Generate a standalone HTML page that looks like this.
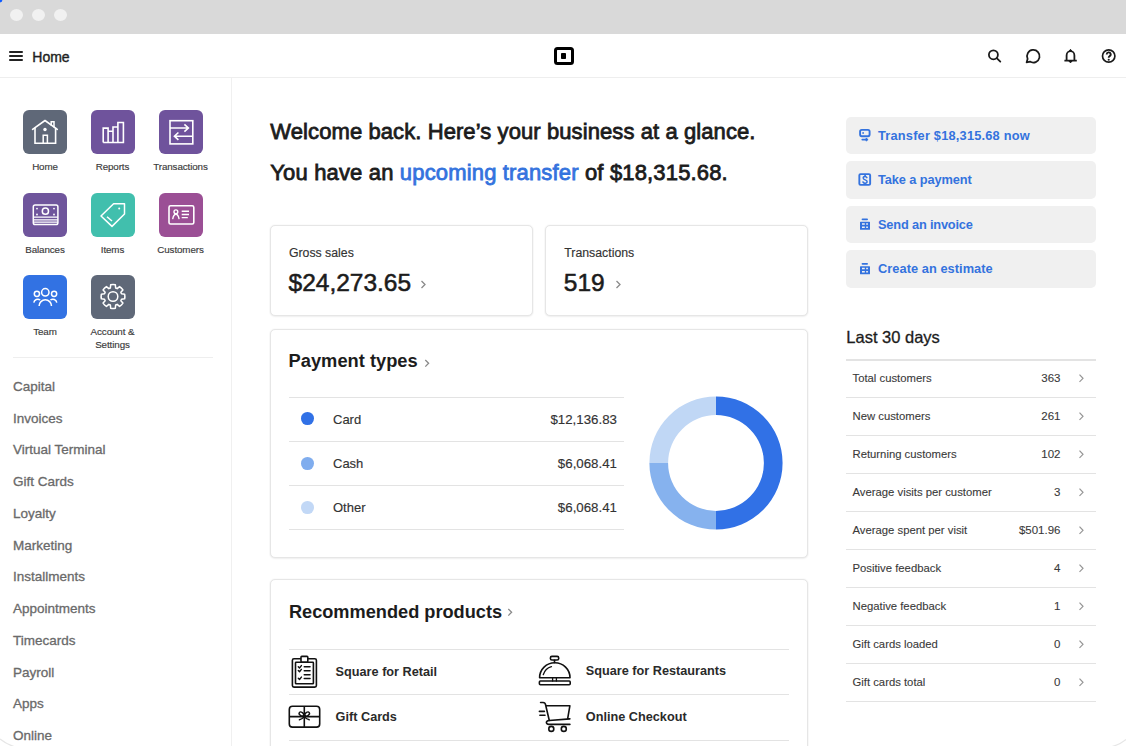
<!DOCTYPE html>
<html><head><meta charset="utf-8">
<style>
*{margin:0;padding:0;box-sizing:border-box}
html,body{width:1126px;height:746px;overflow:hidden;background:#fff;font-family:"Liberation Sans",sans-serif;color:#1f1f1f}
.a{position:absolute}
.t,.menu{-webkit-text-stroke:0.3px currentColor}
.rl,.rv{-webkit-text-stroke:0.1px currentColor}
.lbl{-webkit-text-stroke:0.15px currentColor}
.t{position:absolute;line-height:1;white-space:nowrap}
#titlebar{left:0;top:0;width:1126px;height:34px;background:#d9d9d9}
.dot{position:absolute;top:9px;width:13px;height:12px;border-radius:50%;background:#f1f1f1}
#header{left:0;top:34px;width:1126px;height:44px;background:#fff;border-bottom:1px solid #eeeeee}
#sidebar{left:0;top:78px;width:232px;height:668px;border-right:1px solid #f0f0f0}
.tile{position:absolute;width:44px;height:44px;border-radius:6px}
.tile svg{position:absolute;left:0;top:0}
.lbl{position:absolute;line-height:1;white-space:nowrap;font-size:9.8px;letter-spacing:-0.1px;color:#3a3a3a;text-align:center;width:80px}
.menu{position:absolute;left:13px;line-height:1;white-space:nowrap;font-size:13.5px;color:#6a6a6a}
.card{position:absolute;background:#fff;border:1px solid #e6e6e6;border-radius:5px;box-shadow:0 0 2px rgba(0,0,0,0.07),0 1px 2px rgba(0,0,0,0.05)}
.hline{position:absolute;height:1px;background:#e3e3e3}
.btn{position:absolute;left:846px;width:250px;height:37.5px;background:#f0f0f0;border-radius:5px}
.btxt{position:absolute;left:878px;line-height:1;white-space:nowrap;font-size:12.8px;font-weight:700;color:#3473de}
.rl{position:absolute;left:852.5px;line-height:1;white-space:nowrap;font-size:11.3px;color:#3a3a3a}
.rv{position:absolute;right:65.5px;line-height:1;white-space:nowrap;font-size:11.5px;color:#3a3a3a;text-align:right}
</style></head><body>
<div id="titlebar" class="a">
  <div class="dot" style="left:9.5px"></div>
  <div class="dot" style="left:31.5px"></div>
  <div class="dot" style="left:53.5px"></div>
</div>
<div id="header" class="a"></div>
<!-- hamburger -->
<div class="a" style="left:9px;top:50.8px;width:14.3px;height:1.8px;background:#222;border-radius:0.9px"></div>
<div class="a" style="left:9px;top:55px;width:14.3px;height:1.8px;background:#222;border-radius:0.9px"></div>
<div class="a" style="left:9px;top:59.3px;width:14.3px;height:1.8px;background:#222;border-radius:0.9px"></div>
<div class="t" style="left:32.3px;top:50px;font-size:14px;color:#1f1f1f;-webkit-text-stroke:0.4px #1f1f1f">Home</div>
<!-- square logo -->
<div class="a" style="left:554.4px;top:46.6px;width:19.2px;height:18.8px;border:3.3px solid #000;border-radius:3.5px"></div>
<div class="a" style="left:561.3px;top:53.4px;width:5.2px;height:5.2px;background:#000;border-radius:0.8px"></div>


<svg class="a" style="left:980px;top:42px" width="140" height="28" viewBox="980 42 140 28">
  <circle cx="993.4" cy="54.8" r="4.5" fill="none" stroke="#1a1a1a" stroke-width="1.8"/>
  <path d="M996.7 58.2 L1000.3 61.6" stroke="#1a1a1a" stroke-width="1.8" stroke-linecap="round"/>
  <path d="M1026.6 62.4 L1027.6 58.9 A6.3 6.3 0 1 1 1030 61.6 Z" fill="none" stroke="#1a1a1a" stroke-width="1.8" stroke-linejoin="round"/>
  <path d="M1064.4 60.6 H1076.8 M1066.6 60.6 V55.4 A3.9 4.2 0 0 1 1074.4 55.4 V60.6" fill="none" stroke="#1a1a1a" stroke-width="1.8"/>
  <path d="M1069.3 50.9 L1070.5 49.3 L1071.7 50.9 Z M1068.9 61 L1070.5 62.9 L1072.1 61 Z" fill="#1a1a1a" stroke="#1a1a1a" stroke-width="0.9" stroke-linejoin="round"/>
  <circle cx="1108.7" cy="56" r="6.2" fill="none" stroke="#1a1a1a" stroke-width="1.7"/>
  <path d="M1106.7 54.4 A2 2 0 1 1 1109.5 56.2 C1108.9 56.6 1108.7 57 1108.7 57.7" fill="none" stroke="#1a1a1a" stroke-width="1.9" stroke-linecap="butt"/>
  <circle cx="1108.7" cy="59.7" r="1.05" fill="#1a1a1a"/>
</svg>
<div id="sidebar" class="a"></div>
<!--SIDEBAR-->
<div class="tile" style="left:23px;top:110px;background:#5f6878"><svg width="44" height="44" viewBox="0 0 44 44"><g transform="translate(0,1)"><path d="M9.6 18.3 L22 9.5 L34.3 18.3" fill="none" stroke="#fff" stroke-width="1.6" stroke-linecap="round" stroke-linejoin="round"/><path d="M12 16.8 V32.3 H32.6 V16.8" fill="none" stroke="#fff" stroke-width="1.6"/><path d="M28.2 14.5 V10.8 H31 V16.4" fill="none" stroke="#fff" stroke-width="1.5"/><circle cx="22" cy="18.5" r="1.7" fill="#fff"/><path d="M20.2 32.3 V24.3 H24.4 V32.3" fill="none" stroke="#fff" stroke-width="1.5"/></g></svg></div>
<div class="lbl" style="left:5.0px;top:162.4px">Home</div>
<div class="tile" style="left:90.5px;top:110px;background:#6f539c"><svg width="44" height="44" viewBox="0 0 44 44"><g transform="translate(0,0.5)"><path d="M12.2 32 V17.6 H17.1 V32 M17.1 32 V20.8 H22 V32 M22 32 V16.5 H26.9 V32 M26.9 32 V12 H32.4 V32 H12.2" fill="none" stroke="#fff" stroke-width="1.6" stroke-linejoin="miter"/></g></svg></div>
<div class="lbl" style="left:72.5px;top:162.4px">Reports</div>
<div class="tile" style="left:158.5px;top:110px;background:#6f539c"><svg width="44" height="44" viewBox="0 0 44 44"><g transform="translate(0,0.5)"><rect x="11" y="10.2" width="22.8" height="23.2" fill="none" stroke="#fff" stroke-width="1.6"/><path d="M11 17.5 H29.4 M25.4 13.8 L29.4 17.5 L25.4 21.2 M33.8 25.7 H15.4 M19.4 22 L15.4 25.7 L19.4 29.4" fill="none" stroke="#fff" stroke-width="1.6"/></g></svg></div>
<div class="lbl" style="left:140.5px;top:162.4px">Transactions</div>
<div class="tile" style="left:23px;top:193px;background:#6f559c"><svg width="44" height="44" viewBox="0 0 44 44"><rect x="10.3" y="11.9" width="24.6" height="19.6" rx="1.8" fill="none" stroke="#fff" stroke-width="1.5"/><path d="M10.3 24.2 H34.9 M10.3 26.8 H34.9 M10.3 29.2 H34.9" stroke="#fff" stroke-width="1.3"/><circle cx="22.4" cy="18.2" r="3.1" fill="none" stroke="#fff" stroke-width="1.5"/><circle cx="14" cy="15.6" r="0.9" fill="#fff"/><circle cx="31" cy="15.6" r="0.9" fill="#fff"/><circle cx="14" cy="21.5" r="0.9" fill="#fff"/><circle cx="31" cy="21.5" r="0.9" fill="#fff"/></svg></div>
<div class="lbl" style="left:5.0px;top:245.1px">Balances</div>
<div class="tile" style="left:90.5px;top:193px;background:#41bfad"><svg width="44" height="44" viewBox="0 0 44 44"><path d="M22.6 10.8 H33.5 V21 L21 33.4 L10 23 Z" fill="none" stroke="#fff" stroke-width="1.5" stroke-linejoin="round"/><circle cx="28.2" cy="15.6" r="1" fill="#fff"/><path d="M16 23.8 L21 28" stroke="#fff" stroke-width="1.5"/></svg></div>
<div class="lbl" style="left:72.5px;top:245.1px">Items</div>
<div class="tile" style="left:158.5px;top:193px;background:#9b4f95"><svg width="44" height="44" viewBox="0 0 44 44"><rect x="10" y="12.8" width="24.8" height="18.2" rx="1.6" fill="none" stroke="#fff" stroke-width="1.6"/><circle cx="16.9" cy="18.8" r="1.9" fill="none" stroke="#fff" stroke-width="1.4"/><path d="M13.8 25.6 C14.4 22.8 15.4 21.3 16.9 21.3 C18.4 21.3 19.4 22.8 20 25.6" fill="none" stroke="#fff" stroke-width="1.4" stroke-linecap="round"/><path d="M22.7 18.3 H30 M22.7 21.5 H30 M22.7 24.6 H28.8" stroke="#fff" stroke-width="1.4"/></svg></div>
<div class="lbl" style="left:140.5px;top:245.1px">Customers</div>
<div class="tile" style="left:23px;top:275px;background:#3272e3"><svg width="44" height="44" viewBox="0 0 44 44"><circle cx="22.3" cy="17.3" r="3.7" fill="none" stroke="#fff" stroke-width="1.5"/><circle cx="13.9" cy="18.8" r="2.6" fill="none" stroke="#fff" stroke-width="1.5"/><circle cx="31.1" cy="18.8" r="2.6" fill="none" stroke="#fff" stroke-width="1.5"/><path d="M16.1 31 A6.2 6.2 0 0 1 28.5 31" fill="none" stroke="#fff" stroke-width="1.5"/><path d="M10.8 27.6 A4 4 0 0 1 17.2 25" fill="none" stroke="#fff" stroke-width="1.5"/><path d="M27.4 25 A4 4 0 0 1 33.8 27.6" fill="none" stroke="#fff" stroke-width="1.5"/></svg></div>
<div class="lbl" style="left:5.0px;top:327.2px">Team</div>
<div class="tile" style="left:90.5px;top:275px;background:#5f6878"><svg width="44" height="44" viewBox="0 0 44 44"><path d="M19.37 13.00 L19.64 9.84 A11.9 11.9 0 0 1 24.36 9.84 L24.63 13.00 A8.9 8.9 0 0 1 26.15 13.63 L28.58 11.58 A11.9 11.9 0 0 1 31.92 14.92 L29.87 17.35 A8.9 8.9 0 0 1 30.50 18.87 L33.66 19.14 A11.9 11.9 0 0 1 33.66 23.86 L30.50 24.13 A8.9 8.9 0 0 1 29.87 25.65 L31.92 28.08 A11.9 11.9 0 0 1 28.58 31.42 L26.15 29.37 A8.9 8.9 0 0 1 24.63 30.00 L24.36 33.16 A11.9 11.9 0 0 1 19.64 33.16 L19.37 30.00 A8.9 8.9 0 0 1 17.85 29.37 L15.42 31.42 A11.9 11.9 0 0 1 12.08 28.08 L14.13 25.65 A8.9 8.9 0 0 1 13.50 24.13 L10.34 23.86 A11.9 11.9 0 0 1 10.34 19.14 L13.50 18.87 A8.9 8.9 0 0 1 14.13 17.35 L12.08 14.92 A11.9 11.9 0 0 1 15.42 11.58 L17.85 13.63 A8.9 8.9 0 0 1 19.37 13.00 Z" fill="none" stroke="#fff" stroke-width="1.5" stroke-linejoin="round"/><circle cx="22" cy="21.5" r="4.8" fill="none" stroke="#fff" stroke-width="1.5"/></svg></div>
<div class="lbl" style="left:72.5px;top:327.2px">Account &amp;</div>
<div class="lbl" style="left:72.5px;top:339.9px">Settings</div>
<div class="a" style="left:13px;top:357px;width:200px;height:1px;background:#eeeeee"></div>
<div class="menu" style="top:380.00px">Capital</div>
<div class="menu" style="top:411.75px">Invoices</div>
<div class="menu" style="top:443.49px">Virtual Terminal</div>
<div class="menu" style="top:475.24px">Gift Cards</div>
<div class="menu" style="top:506.98px">Loyalty</div>
<div class="menu" style="top:538.73px">Marketing</div>
<div class="menu" style="top:570.47px">Installments</div>
<div class="menu" style="top:602.22px">Appointments</div>
<div class="menu" style="top:633.96px">Timecards</div>
<div class="menu" style="top:665.70px">Payroll</div>
<div class="menu" style="top:697.45px">Apps</div>
<div class="menu" style="top:729.19px">Online</div>
<!--/SIDEBAR-->
<!--MAIN-->
<div class="t" style="left:270.3px;top:120.6px;font-size:22px;font-weight:400;-webkit-text-stroke:0.8px #1c1c1c;color:#1c1c1c;letter-spacing:0.09px">Welcome back. Here’s your business at a glance.</div>
<div class="t" style="left:270.3px;top:161.7px;font-size:22px;font-weight:400;-webkit-text-stroke:0.8px #1c1c1c;color:#1c1c1c;letter-spacing:0.16px">You have an <span style="color:#3473de;-webkit-text-stroke:0.8px #3473de">upcoming transfer</span> of $18,315.68.</div>

<div class="card" style="left:269.5px;top:224.5px;width:263px;height:91.5px"></div>
<div class="t" style="left:288.9px;top:246.8px;font-size:12.3px;color:#333;-webkit-text-stroke:0.15px #333">Gross sales</div>
<div class="t" style="left:288.5px;top:270.8px;font-size:24.5px;color:#1c1c1c;-webkit-text-stroke:0.55px #1c1c1c">$24,273.65</div>
<svg class="a" style="left:419px;top:279px" width="9" height="11" viewBox="0 0 9 11"><path d="M2.5 2 L6 5.5 L2.5 9" fill="none" stroke="#8a8a8a" stroke-width="1.3"/></svg>

<div class="card" style="left:545px;top:224.5px;width:263px;height:91.5px"></div>
<div class="t" style="left:564.3px;top:246.8px;font-size:12.3px;color:#333;-webkit-text-stroke:0.15px #333">Transactions</div>
<div class="t" style="left:563.8px;top:270.8px;font-size:24.5px;color:#1c1c1c;-webkit-text-stroke:0.55px #1c1c1c">519</div>
<svg class="a" style="left:613.5px;top:279px" width="9" height="11" viewBox="0 0 9 11"><path d="M2.5 2 L6 5.5 L2.5 9" fill="none" stroke="#8a8a8a" stroke-width="1.3"/></svg>

<div class="card" style="left:269.5px;top:329px;width:538.5px;height:229px"></div>
<div class="t" style="left:288.6px;top:351.8px;font-size:18.3px;font-weight:700;-webkit-text-stroke:0;color:#1c1c1c">Payment types</div>
<svg class="a" style="left:422.5px;top:357.5px" width="9" height="11" viewBox="0 0 9 11"><path d="M2.3 2 L5.6 5.3 L2.3 8.6" fill="none" stroke="#8a8a8a" stroke-width="1.3"/></svg>
<div class="hline" style="left:288.5px;top:397px;width:335.5px"></div>
<div class="hline" style="left:288.5px;top:440.5px;width:335.5px"></div>
<div class="hline" style="left:288.5px;top:484.8px;width:335.5px"></div>
<div class="hline" style="left:288.5px;top:528.8px;width:335.5px"></div>
<div class="a" style="left:301px;top:412.4px;width:12.8px;height:12.8px;border-radius:50%;background:#3171e6"></div>
<div class="a" style="left:301px;top:457.1px;width:12.8px;height:12.8px;border-radius:50%;background:#80adee"></div>
<div class="a" style="left:301px;top:501.3px;width:12.8px;height:12.8px;border-radius:50%;background:#c2d8f6"></div>
<div class="t" style="left:333px;top:413px;font-size:13px;color:#333;-webkit-text-stroke:0.15px #333">Card</div>
<div class="t" style="left:333px;top:456.9px;font-size:13px;color:#333;-webkit-text-stroke:0.15px #333">Cash</div>
<div class="t" style="left:333px;top:501.2px;font-size:13px;color:#333;-webkit-text-stroke:0.15px #333">Other</div>
<div class="t" style="right:509px;top:413px;font-size:13.3px;color:#333;-webkit-text-stroke:0.15px #333">$12,136.83</div>
<div class="t" style="right:509px;top:456.9px;font-size:13.3px;color:#333;-webkit-text-stroke:0.15px #333">$6,068.41</div>
<div class="t" style="right:509px;top:501.2px;font-size:13.3px;color:#333;-webkit-text-stroke:0.15px #333">$6,068.41</div>
<svg class="a" style="left:648px;top:395px" width="136" height="136" viewBox="0 0 136 136">
  <path d="M68 1.4 A66.6 66.6 0 0 1 68 134.6 L68 115.9 A47.9 47.9 0 0 0 68 20.1 Z" fill="#3171e6"/>
  <path d="M68 134.6 A66.6 66.6 0 0 1 1.4 68 L20.1 68 A47.9 47.9 0 0 0 68 115.9 Z" fill="#86b2ee"/>
  <path d="M1.4 68 A66.6 66.6 0 0 1 68 1.4 L68 20.1 A47.9 47.9 0 0 0 20.1 68 Z" fill="#c0d7f5"/>
</svg>

<div class="card" style="left:269.5px;top:579.3px;width:538.5px;height:200px"></div>
<div class="t" style="left:288.9px;top:602.6px;font-size:18.2px;font-weight:700;-webkit-text-stroke:0;color:#1c1c1c">Recommended products</div>
<svg class="a" style="left:506px;top:606.5px" width="9" height="11" viewBox="0 0 9 11"><path d="M2.3 2 L5.6 5.3 L2.3 8.6" fill="none" stroke="#8a8a8a" stroke-width="1.3"/></svg>
<div class="hline" style="left:288.5px;top:649px;width:500.5px"></div>
<div class="hline" style="left:288.5px;top:694.2px;width:500.5px"></div>
<div class="hline" style="left:288.5px;top:739.5px;width:500.5px"></div>
<div class="t" style="left:335.6px;top:666.2px;font-size:12.7px;font-weight:700;-webkit-text-stroke:0;color:#2a2a2a">Square for Retail</div>
<div class="t" style="left:585.8px;top:665.2px;font-size:12.7px;font-weight:700;-webkit-text-stroke:0;color:#2a2a2a">Square for Restaurants</div>
<div class="t" style="left:335.6px;top:711px;font-size:12.7px;font-weight:700;-webkit-text-stroke:0;color:#2a2a2a">Gift Cards</div>
<div class="t" style="left:585.8px;top:711px;font-size:12.7px;font-weight:700;-webkit-text-stroke:0;color:#2a2a2a">Online Checkout</div>

<svg class="a" style="left:280px;top:650px" width="300" height="90" viewBox="280 650 300 90">
 <g fill="none" stroke="#111" stroke-width="1.6" stroke-linejoin="round" stroke-linecap="round">
  <rect x="292.4" y="658.7" width="24" height="28.4" rx="1.6"/>
  <rect x="295.5" y="662.3" width="17.9" height="21.5" rx="0.6"/>
  <rect x="301" y="656.4" width="6.8" height="5.6" rx="0.8" fill="#fff"/>
  <path d="M298.3 666.8 L299.5 668 L301.4 665.6 M298.3 670.6 L299.5 671.8 L301.4 669.4 M298.3 678.3 L299.5 679.5 L301.4 677.1" stroke-width="1.4"/>
  <path d="M304.3 666.8 H310 M304.3 670.8 H310 M304.3 674.7 H310 M304.3 678.5 H310" stroke-width="1.6"/>
  <rect x="289.3" y="706.3" width="30.4" height="20.8" rx="3.2"/>
  <path d="M304.3 706.3 V727.1 M289.3 716.6 H319.7" stroke-linecap="butt"/>
  <ellipse cx="301.4" cy="714" rx="2.5" ry="1.7" transform="rotate(35 301.4 714)" stroke-width="1.4"/><ellipse cx="307.2" cy="714" rx="2.5" ry="1.7" transform="rotate(-35 307.2 714)" stroke-width="1.4"/><path d="M304.3 716.8 C302.5 718.6 300.5 719.6 299.4 719.8 M304.3 716.8 C306.1 718.6 308.1 719.6 309.2 719.8" stroke-width="1.4"/>
 </g>
 <g fill="none" stroke="#111" stroke-width="1.6" stroke-linejoin="round" stroke-linecap="round">
  <rect x="550.4" y="656.4" width="8.3" height="3.6" rx="1.5"/>
  <path d="M554.5 660.2 V662.6"/>
  <path d="M539.6 677.8 A15.2 15 0 0 1 570 677.8 Z"/>
  <path d="M543.3 674.6 A12 12 0 0 1 551.4 666.6" stroke-width="1.4"/>
  <rect x="539.4" y="681" width="30.8" height="3.7" rx="1"/>
  <path d="M552.6 678 V681 M556.4 678 V681" stroke-width="1.3"/>
  <path d="M540.6 702.5 H543 C544.7 702.5 545.6 703.6 545.8 705.7 L549.3 720.5 L569.9 718.9 M545.8 705.7 H569.9 L567.6 719.1"/>
  <path d="M549.3 720.5 C546.8 720.7 546.3 722 546.4 722.6 C546.6 723.9 547.5 724.4 549 724.4 H569.9"/>
  <circle cx="551.3" cy="728.9" r="2.5"/>
  <circle cx="563.8" cy="728.9" r="2.5"/>
  <path d="M539.4 711.4 H544.4 M539.9 715.3 H545"/>
 </g>
</svg>


<!--RIGHT-->
<div class="btn" style="top:116.5px"></div>
<div class="btn" style="top:161px"></div>
<div class="btn" style="top:205.5px"></div>
<div class="btn" style="top:250px"></div>
<div class="btxt" style="top:130px;letter-spacing:0.2px">Transfer $18,315.68 now</div>
<div class="btxt" style="top:174.3px;letter-spacing:-0.1px">Take a payment</div>
<div class="btxt" style="top:218.8px;letter-spacing:-0.18px">Send an invoice</div>
<div class="btxt" style="top:263.2px;letter-spacing:0.05px">Create an estimate</div>

<svg class="a" style="left:850px;top:120px" width="30" height="160" viewBox="850 120 30 160">
 <g fill="none" stroke="#3473de" stroke-width="1.9" stroke-linejoin="round">
  <rect x="860.1" y="129.9" width="9.5" height="6.3" rx="1.6"/>
  <circle cx="863.1" cy="133" r="0.9" fill="#3473de" stroke="none"/>
  <path d="M862.3 139.6 H866.5" stroke-linecap="round" stroke-width="1.8"/>
  <path d="M866.1 138.1 L868.1 139.6 L866.1 141.1 Z" fill="#3473de" stroke-width="0.9"/>
  <rect x="859.35" y="174.15" width="10.8" height="10.7" rx="1.2"/>
  <path d="M866.9 177.6 C866.5 176.8 865.9 176.5 865.1 176.5 C863.9 176.5 863.2 177.2 863.2 178 C863.2 180.4 867.1 179.4 867.1 181.6 C867.1 182.6 866.2 183.2 865.1 183.2 C864.2 183.2 863.5 182.8 863 182" stroke-width="1.5" stroke-linecap="round"/>
  <path d="M865.1 174.6 V176.6 M865.1 183.2 V185" stroke-width="1.6"/>
 </g>
 <g fill="#3473de">
  <rect x="861.6" y="218.4" width="6.4" height="1.8" rx="0.9"/>
  <path d="M860.6 221.7 H869.4 A0.6 0.6 0 0 1 870 222.3 V229.2 A0.6 0.6 0 0 1 869.4 229.8 H860.6 A0.6 0.6 0 0 1 860 229.2 V222.3 A0.6 0.6 0 0 1 860.6 221.7 Z M862 223.2 V224.8 H864.8 V223.2 Z M866.2 223.2 V224.8 H867.9 V223.2 Z M862 226.4 V227.9 H864.8 V226.4 Z M866.2 226.4 V227.9 H867.9 V226.4 Z" fill-rule="evenodd"/>
  <rect x="861.6" y="262.9" width="6.4" height="1.8" rx="0.9"/>
  <path d="M860.6 266.2 H869.4 A0.6 0.6 0 0 1 870 266.8 V273.7 A0.6 0.6 0 0 1 869.4 274.3 H860.6 A0.6 0.6 0 0 1 860 273.7 V266.8 A0.6 0.6 0 0 1 860.6 266.2 Z M862 267.7 V269.3 H864.8 V267.7 Z M866.2 267.7 V269.3 H867.9 V267.7 Z M862 270.9 V272.4 H864.8 V270.9 Z M866.2 270.9 V272.4 H867.9 V270.9 Z" fill-rule="evenodd"/>
 </g>
</svg>

<div class="t" style="left:846.3px;top:328.5px;font-size:16.5px;color:#1c1c1c">Last 30 days</div>

<div class="hline" style="left:846px;top:359.4px;width:250px;height:1.5px"></div>
<div class="hline" style="left:846px;top:397.3px;width:250px"></div>
<div class="hline" style="left:846px;top:435.3px;width:250px"></div>
<div class="hline" style="left:846px;top:473.2px;width:250px"></div>
<div class="hline" style="left:846px;top:511.2px;width:250px"></div>
<div class="hline" style="left:846px;top:549.1px;width:250px"></div>
<div class="hline" style="left:846px;top:587.1px;width:250px"></div>
<div class="hline" style="left:846px;top:625.0px;width:250px"></div>
<div class="hline" style="left:846px;top:663.0px;width:250px"></div>
<div class="hline" style="left:846px;top:701.0px;width:250px"></div>
<div class="rl" style="top:373.0px">Total customers</div>
<div class="rv" style="top:373.0px">363</div>
<svg class="a" style="left:1077px;top:373.2px" width="9" height="10" viewBox="0 0 9 10"><path d="M2.5 1.7 L6 5.3 L2.5 8.9" fill="none" stroke="#969696" stroke-width="1.2"/></svg>
<div class="rl" style="top:410.9px">New customers</div>
<div class="rv" style="top:410.9px">261</div>
<svg class="a" style="left:1077px;top:411.1px" width="9" height="10" viewBox="0 0 9 10"><path d="M2.5 1.7 L6 5.3 L2.5 8.9" fill="none" stroke="#969696" stroke-width="1.2"/></svg>
<div class="rl" style="top:448.9px">Returning customers</div>
<div class="rv" style="top:448.9px">102</div>
<svg class="a" style="left:1077px;top:449.1px" width="9" height="10" viewBox="0 0 9 10"><path d="M2.5 1.7 L6 5.3 L2.5 8.9" fill="none" stroke="#969696" stroke-width="1.2"/></svg>
<div class="rl" style="top:486.8px">Average visits per customer</div>
<div class="rv" style="top:486.8px">3</div>
<svg class="a" style="left:1077px;top:487.1px" width="9" height="10" viewBox="0 0 9 10"><path d="M2.5 1.7 L6 5.3 L2.5 8.9" fill="none" stroke="#969696" stroke-width="1.2"/></svg>
<div class="rl" style="top:524.8px">Average spent per visit</div>
<div class="rv" style="top:524.8px">$501.96</div>
<svg class="a" style="left:1077px;top:525.0px" width="9" height="10" viewBox="0 0 9 10"><path d="M2.5 1.7 L6 5.3 L2.5 8.9" fill="none" stroke="#969696" stroke-width="1.2"/></svg>
<div class="rl" style="top:562.7px">Positive feedback</div>
<div class="rv" style="top:562.7px">4</div>
<svg class="a" style="left:1077px;top:563.0px" width="9" height="10" viewBox="0 0 9 10"><path d="M2.5 1.7 L6 5.3 L2.5 8.9" fill="none" stroke="#969696" stroke-width="1.2"/></svg>
<div class="rl" style="top:600.7px">Negative feedback</div>
<div class="rv" style="top:600.7px">1</div>
<svg class="a" style="left:1077px;top:600.9px" width="9" height="10" viewBox="0 0 9 10"><path d="M2.5 1.7 L6 5.3 L2.5 8.9" fill="none" stroke="#969696" stroke-width="1.2"/></svg>
<div class="rl" style="top:638.6px">Gift cards loaded</div>
<div class="rv" style="top:638.6px">0</div>
<svg class="a" style="left:1077px;top:638.9px" width="9" height="10" viewBox="0 0 9 10"><path d="M2.5 1.7 L6 5.3 L2.5 8.9" fill="none" stroke="#969696" stroke-width="1.2"/></svg>
<div class="rl" style="top:676.6px">Gift cards total</div>
<div class="rv" style="top:676.6px">0</div>
<svg class="a" style="left:1077px;top:676.8px" width="9" height="10" viewBox="0 0 9 10"><path d="M2.5 1.7 L6 5.3 L2.5 8.9" fill="none" stroke="#969696" stroke-width="1.2"/></svg>

<svg class="a" style="left:0;top:0" width="4" height="4"><circle cx="0" cy="0" r="2.4" fill="#0f5cff"/></svg>
<svg class="a" style="left:0;top:700px" width="1126" height="46" viewBox="0 700 1126 46">
 <path d="M0 739 Q6 744 14 746.5" fill="none" stroke="#e6e6e6" stroke-width="1.2"/>
 <path d="M1126 739.5 Q1120 744.5 1112 746.5" fill="none" stroke="#e6e6e6" stroke-width="1.2"/>
</svg>
</body></html>
